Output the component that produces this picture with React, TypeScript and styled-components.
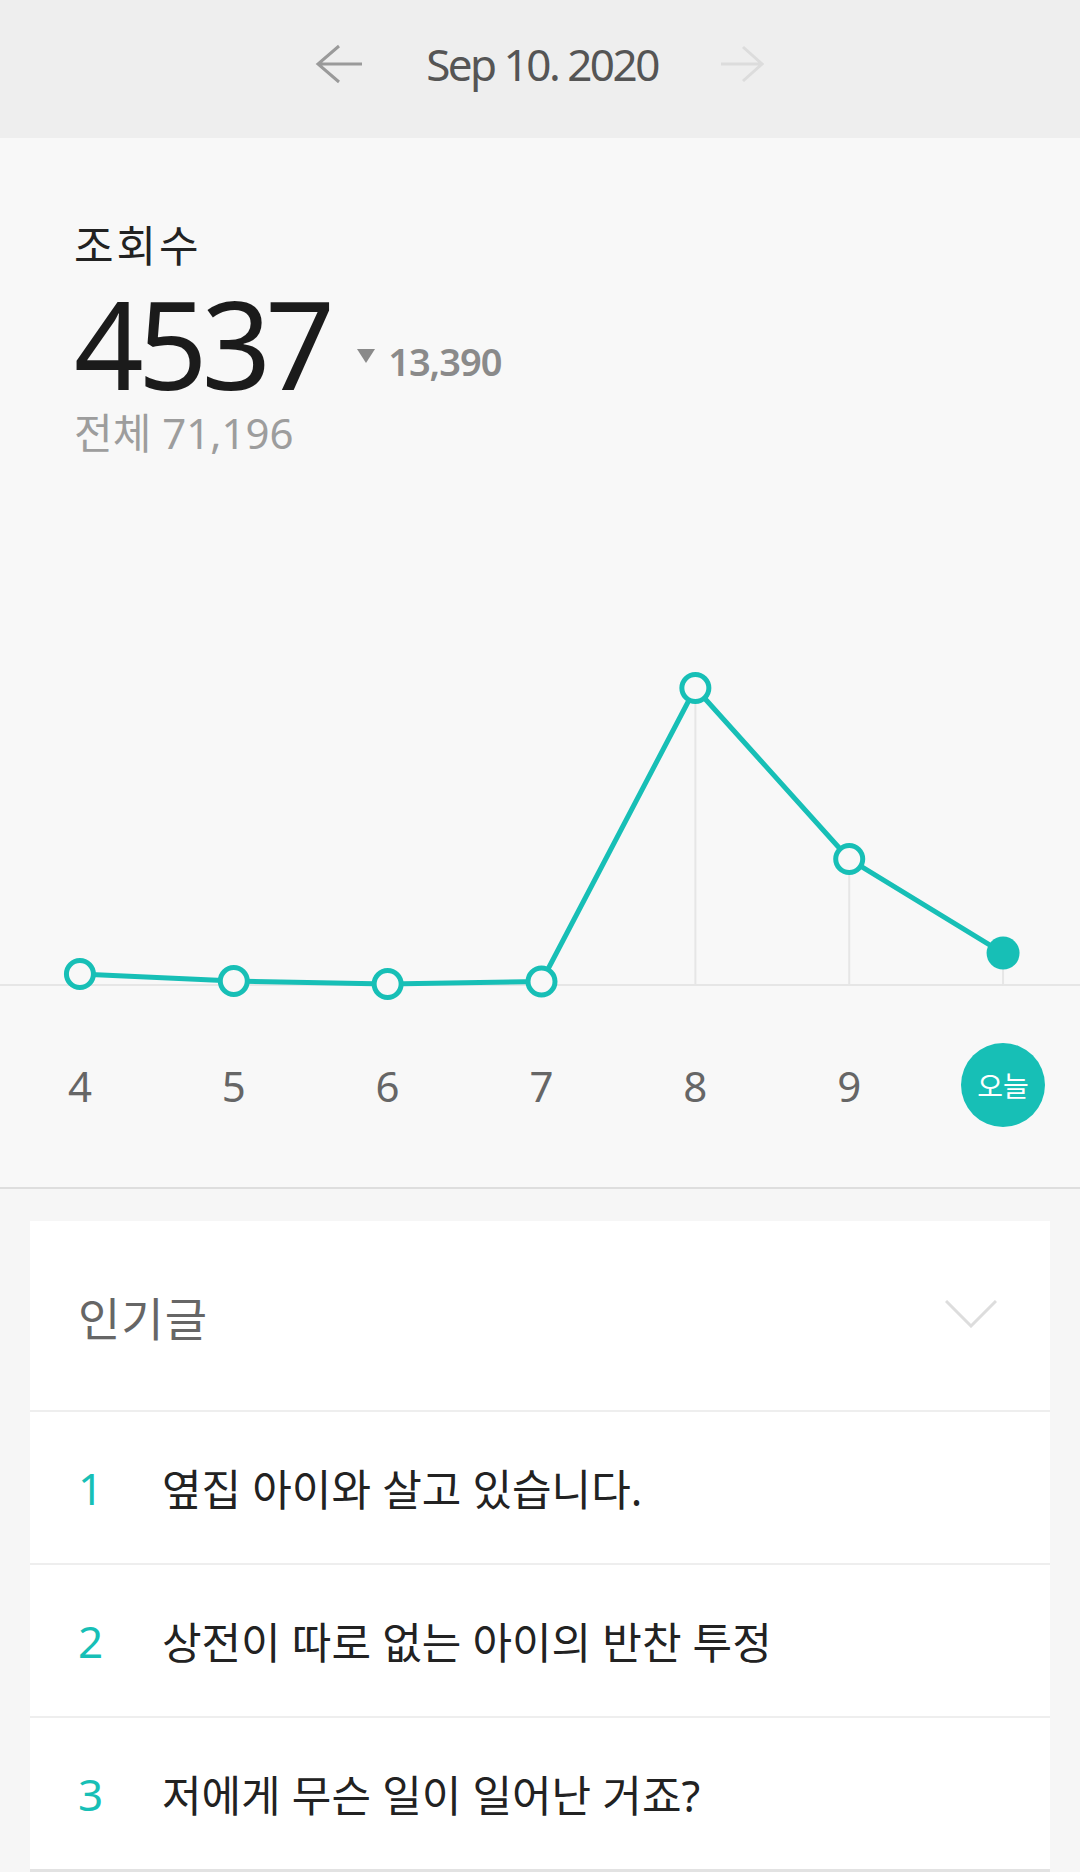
import React from 'react'
import styled, { createGlobalStyle } from 'styled-components'

const TEAL = '#17bfb6'

const GlobalStyle = createGlobalStyle`
  body{
    margin:0;
    background:#f6f6f6;
    font-family:"Noto Sans","Noto Sans CJK KR",sans-serif;
  }
`

const Page = styled.div`
  width:1080px;
  min-height:1872px;
  background:#f6f6f6;
`

const TopBar = styled.header`
  height:138px;
  background:#eeeeee;
  display:flex;
  align-items:center;
  justify-content:center;
  gap:63px;
`
const DateText = styled.span`
  font-size:44px;
  line-height:1;
  letter-spacing:-2.5px;
  color:#555;
  margin-top:-10px;
`
const NavArrow = styled.svg<{ $dim?: boolean }>`
  display:block;
  margin-top:-10px;
  color:${p => (p.$dim ? '#dcdcdc' : '#9a9a9a')};
`

const Summary = styled.section`
  background:#f8f8f8;
  border-bottom:2px solid #dedede;
`
const Stats = styled.div`
  padding:84px 74px 0;
`
const Title = styled.h2`
  margin:0;
  font-size:43px;
  line-height:48px;
  font-weight:400;
  letter-spacing:3px;
  color:#222;
`
const CountRow = styled.div`
  display:flex;
  align-items:flex-end;
  margin-top:12px;
`
const BigNumber = styled.span`
  font-size:122px;
  line-height:1;
  letter-spacing:-6px;
  color:#1b1b1b;
`
const Delta = styled.span`
  display:flex;
  align-items:center;
  gap:12px;
  margin:0 0 24px 27px;
  font-size:38px;
  line-height:1;
  font-weight:600;
  letter-spacing:-1px;
  color:#8a8a8a;
  svg{ margin-bottom:10px; }
`
const Total = styled.div`
  margin-top:5px;
  font-size:42px;
  line-height:48px;
  color:#9d9d9d;
`

const ChartSvg = styled.svg`
  display:block;
  margin-top:145px;
`

const Days = styled.div`
  display:grid;
  grid-template-columns:repeat(7,1fr);
  padding:41px 0 60px 3px;
`
const Day = styled.div<{ $today?: boolean }>`
  justify-self:center;
  width:84px;
  height:84px;
  border-radius:50%;
  display:flex;
  align-items:center;
  justify-content:center;
  font-size:${p => (p.$today ? '28px' : '42px')};
  color:${p => (p.$today ? '#fff' : '#666')};
  background:${p => (p.$today ? TEAL : 'transparent')};
`

const CardWrap = styled.div`
  padding:32px 30px 0;
`
const Card = styled.div`
  background:#fff;
`
const CardHeader = styled.div`
  height:189px;
  display:flex;
  align-items:center;
  justify-content:space-between;
  padding:0 53px 0 48px;
  border-bottom:2px solid #eeeeee;
  svg{ margin-top:-4px; }
`
const CardTitle = styled.h3`
  margin:0;
  font-size:46px;
  font-weight:400;
  letter-spacing:1px;
  color:#666;
`
const Row = styled.div<{ $last?: boolean }>`
  height:151px;
  display:flex;
  align-items:center;
  padding-left:48px;
  border-bottom:${p => (p.$last ? '3px solid #e2e2e2' : '2px solid #eeeeee')};
`
const Rank = styled.span`
  width:84px;
  font-size:44px;
  color:${TEAL};
`
const PostTitle = styled.span`
  font-size:43px;
  color:#222;
`

const W = 1080
const BASE = 383
const values = [1560, 570, 140, 500, 42260, 17927, 4537]
const labels = ['4', '5', '6', '7', '8', '9', '오늘']
const scale = 297 / 42260
const colW = (W - 3) / 7
const pts = values.map((v, i) => ({ x: 3 + colW * (i + 0.5), y: BASE - v * scale }))

const posts = ['옆집 아이와 살고 있습니다.', '상전이 따로 없는 아이의 반찬 투정', '저에게 무슨 일이 일어난 거죠?']

function Chart() {
  const last = pts.length - 1
  return (
    <ChartSvg width={W} height={400} viewBox={`0 0 ${W} 400`}>
      <line x1={0} y1={BASE} x2={W} y2={BASE} stroke="#e6e6e6" strokeWidth={2} />
      {pts.slice(4).map(p => (
        <line key={p.x} x1={p.x} y1={p.y} x2={p.x} y2={BASE + 1} stroke="#e6e6e6" strokeWidth={2} />
      ))}
      <polyline
        points={pts.map(p => `${p.x},${p.y}`).join(' ')}
        fill="none"
        stroke={TEAL}
        strokeWidth={5}
        strokeLinejoin="round"
      />
      {pts.map((p, i) =>
        i === last ? (
          <circle key={i} cx={p.x} cy={p.y} r={16.5} fill={TEAL} />
        ) : (
          <circle key={i} cx={p.x} cy={p.y} r={13.5} fill="#f8f8f8" stroke={TEAL} strokeWidth={5} />
        )
      )}
    </ChartSvg>
  )
}

export default function App() {
  return (
    <Page>
      <GlobalStyle />
      <TopBar>
        <NavArrow width={48} height={40} viewBox="0 0 48 40">
          <path d="M47 20H3M24 2L3 20L24 38" fill="none" stroke="currentColor" strokeWidth={3} />
        </NavArrow>
        <DateText>Sep 10. 2020</DateText>
        <NavArrow $dim width={44} height={40} viewBox="0 0 44 40">
          <path d="M0 20H41M22 3L41 20L22 37" fill="none" stroke="currentColor" strokeWidth={3} />
        </NavArrow>
      </TopBar>

      <Summary>
        <Stats>
          <Title>조회수</Title>
          <CountRow>
            <BigNumber>4537</BigNumber>
            <Delta>
              <svg width={20} height={16} viewBox="0 0 20 16">
                <path d="M1 1H19L10 15Z" fill="currentColor" />
              </svg>
              13,390
            </Delta>
          </CountRow>
          <Total>전체 71,196</Total>
        </Stats>
        <Chart />
        <Days>
          {labels.map((l, i) => (
            <Day key={l} $today={i === labels.length - 1}>{l}</Day>
          ))}
        </Days>
      </Summary>

      <CardWrap>
        <Card>
          <CardHeader>
            <CardTitle>인기글</CardTitle>
            <svg width={52} height={28} viewBox="0 0 52 28">
              <path d="M1 1L26 26L51 1" fill="none" stroke="#dddddd" strokeWidth={3} />
            </svg>
          </CardHeader>
          {posts.map((t, i) => (
            <Row key={t} $last={i === posts.length - 1}>
              <Rank>{i + 1}</Rank>
              <PostTitle>{t}</PostTitle>
            </Row>
          ))}
        </Card>
      </CardWrap>
    </Page>
  )
}
